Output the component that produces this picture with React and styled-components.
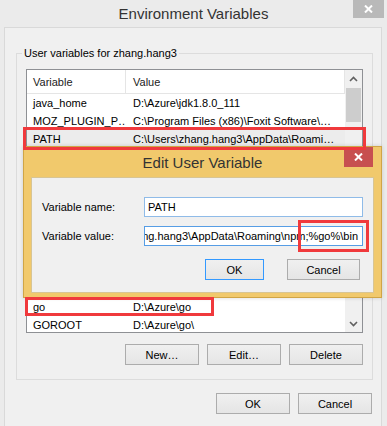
import React from 'react';
import styled, { createGlobalStyle } from 'styled-components';

const GlobalStyle = createGlobalStyle`
  html, body {
    margin: 0;
    padding: 0;
    background: #ebebeb;
  }
  body {
    font-family: "Segoe UI", "Liberation Sans", Arial, sans-serif;
    font-size: 11px;
    color: #000;
  }
`;

const Window = styled.div`
  position: relative;
  width: 387px;
  height: 426px;
  overflow: hidden;
  background: #ebebeb;
  display: flex;
  flex-direction: column;
`;

const TitleBar = styled.div`
  position: relative;
  height: 27px;
  flex: none;
  display: flex;
  align-items: center;
  justify-content: center;
  font-size: 15px;
  color: #333;
`;

const CloseButton = styled.div`
  position: absolute;
  top: ${(p) => p.$top || 0}px;
  right: ${(p) => p.$right}px;
  width: ${(p) => p.$w}px;
  height: ${(p) => p.$h}px;
  background: ${(p) => p.$bg};
  display: flex;
  align-items: center;
  justify-content: center;
`;

const Client = styled.div`
  flex: 1;
  margin: 0 5px 0 4px;
  border: 1px solid #d9d9d9;
  border-bottom: none;
  background: #f0f0f0;
  display: flex;
  flex-direction: column;
`;

const GroupBox = styled.fieldset`
  margin: 17px 8px 0 11px;
  padding: 8px 9px 14px 9px;
  border: 1px solid #dcdcdc;
  min-width: 0;

  legend {
    margin-left: -4px;
    padding: 0 2px;
    line-height: 16px;
    font-size: 11px;
  }
`;

const ListView = styled.div`
  height: 262px;
  border: 1px solid #8e9094;
  background: #fff;
  display: flex;
  overflow: hidden;
`;

const ListBody = styled.div`
  flex: 1;
  min-width: 0;
  display: flex;
  flex-direction: column;
  overflow: hidden;
`;

const Header = styled.div`
  height: 23px;
  flex: none;
  display: flex;
  border-bottom: 1px solid #e5e5e5;
  color: #222;
`;

const Row = styled.div`
  height: 18px;
  flex: none;
  display: flex;
  align-items: center;
  background: ${(p) => (p.$selected ? '#ececec' : 'transparent')};
`;

const Cell = styled.div`
  display: flex;
  align-items: center;
  white-space: nowrap;
  overflow: hidden;
  box-sizing: border-box;
  ${(p) => (p.$first ? 'width: 99px; padding-left: 6px;' : 'flex: 1; padding-left: 7px;')}
  ${(p) => (p.$divider ? 'border-right: 1px solid #e5e5e5; height: 100%;' : '')}
`;

/* rows that sit under the Edit dialog */
const CoveredRows = styled.div`
  height: 150px;
  flex: none;
`;

const ScrollBar = styled.div`
  width: 17px;
  flex: none;
  background: #f0f0f0;
  display: flex;
  flex-direction: column;
`;

const ScrollArrow = styled.div`
  height: 17px;
  flex: none;
  display: flex;
  align-items: center;
  justify-content: center;
  margin-top: ${(p) => (p.$bottom ? 'auto' : '0')};
`;

const Thumb = styled.div`
  height: 34px;
  margin: 1px 1px 0;
  background: #cdcdcd;
`;

const ButtonRow = styled.div`
  display: flex;
  justify-content: flex-end;
  gap: ${(p) => p.$gap || 8}px;
  margin: ${(p) => p.$margin};
`;

const Button = styled.div`
  width: ${(p) => p.$w || 74}px;
  height: 21px;
  box-sizing: border-box;
  border: 1px solid ${(p) => (p.$default ? '#3399ff' : '#acacac')};
  background: linear-gradient(#f0f0f0, #e5e5e5);
  display: flex;
  align-items: center;
  justify-content: center;
  font-size: 11px;
`;

const Dialog = styled.div`
  position: absolute;
  left: 23px;
  top: 146px;
  width: 359px;
  height: 152px;
  box-sizing: border-box;
  border: 1px solid #d0a546;
  background: #f1c96c;
  display: flex;
  flex-direction: column;
  box-shadow: 0 0 4px rgba(0, 0, 0, 0.15);
`;

const DialogTitle = styled.div`
  position: relative;
  height: 30px;
  flex: none;
  display: flex;
  align-items: center;
  justify-content: center;
  font-size: 15px;
  color: #333;
`;

const DialogClient = styled.div`
  flex: 1;
  margin: 0 7px 4px 7px;
  border: 1px solid #d8c594;
  background: #f0f0f0;
  padding: 19px 0 0 10px;
  display: flex;
  flex-direction: column;
  gap: 9px;
`;

const Field = styled.div`
  display: flex;
  align-items: center;
`;

const FieldLabel = styled.div`
  width: 102px;
  flex: none;
`;

const TextBox = styled.div`
  width: 219px;
  height: 20px;
  box-sizing: border-box;
  border: 1px solid ${(p) => (p.$focused ? '#569de5' : '#8fbbe8')};
  background: #fff;
  display: flex;
  align-items: center;
  justify-content: ${(p) => (p.$scrolled ? 'flex-end' : 'flex-start')};
  padding: 0 4px 0 3px;
  white-space: nowrap;
  overflow: hidden;
`;

const Mark = styled.div`
  position: absolute;
  left: ${(p) => p.$x}px;
  top: ${(p) => p.$y}px;
  width: ${(p) => p.$w}px;
  height: ${(p) => p.$h}px;
  box-sizing: border-box;
  border: 3px solid #f0393c;
  pointer-events: none;
`;

const Chevron = ({ up }) => (
  <svg width="9" height="6" viewBox="0 0 9 6">
    <polyline
      points={up ? '1,5 4.5,1.5 8,5' : '1,1 4.5,4.5 8,1'}
      fill="none"
      stroke="#606060"
      strokeWidth="1.6"
    />
  </svg>
);

const CloseGlyph = () => (
  <svg width="9" height="8" viewBox="0 0 9 8">
    <path d="M1 0.5 L8 7.5 M8 0.5 L1 7.5" stroke="#fff" strokeWidth="2" />
  </svg>
);

const variables = [
  { name: 'java_home', value: 'D:\\Azure\\jdk1.8.0_111' },
  { name: 'MOZ_PLUGIN_P…', value: 'C:\\Program Files (x86)\\Foxit Software\\…' },
  { name: 'PATH', value: 'C:\\Users\\zhang.hang3\\AppData\\Roami…', selected: true },
];

const lower = [
  { name: 'go', value: 'D:\\Azure\\go' },
  { name: 'GOROOT', value: 'D:\\Azure\\go\\' },
];

const VarRow = ({ item }) => (
  <Row $selected={item.selected}>
    <Cell $first>{item.name}</Cell>
    <Cell>{item.value}</Cell>
  </Row>
);

export default function App() {
  return (
    <>
      <GlobalStyle />
      <Window>
        <TitleBar>
          Environment Variables
          <CloseButton $right={3} $w={31} $h={18} $bg="#b9b9b9">
            <CloseGlyph />
          </CloseButton>
        </TitleBar>
        <Client>
          <GroupBox>
            <legend>User variables for zhang.hang3</legend>
            <ListView>
              <ListBody>
                <Header>
                  <Cell $first $divider>Variable</Cell>
                  <Cell $divider>Value</Cell>
                </Header>
                {variables.map((v) => (
                  <VarRow key={v.name} item={v} />
                ))}
                <CoveredRows />
                {lower.map((v) => (
                  <VarRow key={v.name} item={v} />
                ))}
              </ListBody>
              <ScrollBar>
                <ScrollArrow>
                  <Chevron up />
                </ScrollArrow>
                <Thumb />
                <ScrollArrow $bottom>
                  <Chevron />
                </ScrollArrow>
              </ScrollBar>
            </ListView>
            <ButtonRow $margin="11px 0 0 0">
              <Button>New…</Button>
              <Button>Edit…</Button>
              <Button>Delete</Button>
            </ButtonRow>
          </GroupBox>
          <ButtonRow $margin="13px 9px 0 0">
            <Button>OK</Button>
            <Button>Cancel</Button>
          </ButtonRow>
        </Client>

        <Dialog>
          <DialogTitle>
            Edit User Variable
            <CloseButton $right={8} $w={29} $h={20} $bg="#c75050">
              <CloseGlyph />
            </CloseButton>
          </DialogTitle>
          <DialogClient>
            <Field>
              <FieldLabel>Variable name:</FieldLabel>
              <TextBox>PATH</TextBox>
            </Field>
            <Field>
              <FieldLabel>Variable value:</FieldLabel>
              <TextBox $focused $scrolled>
                C:\Users\zhang.hang3\AppData\Roaming\npm;%go%\bin
              </TextBox>
            </Field>
            <ButtonRow $gap={23} $margin="4px 13px 0 0">
              <Button $w={59} $default>OK</Button>
              <Button $w={73}>Cancel</Button>
            </ButtonRow>
          </DialogClient>
        </Dialog>

        <Mark $x={23} $y={127} $w={343} $h={23} />
        <Mark $x={298} $y={220} $w={71} $h={32} />
        <Mark $x={25} $y={297} $w={189} $h={19} />
      </Window>
    </>
  );
}
